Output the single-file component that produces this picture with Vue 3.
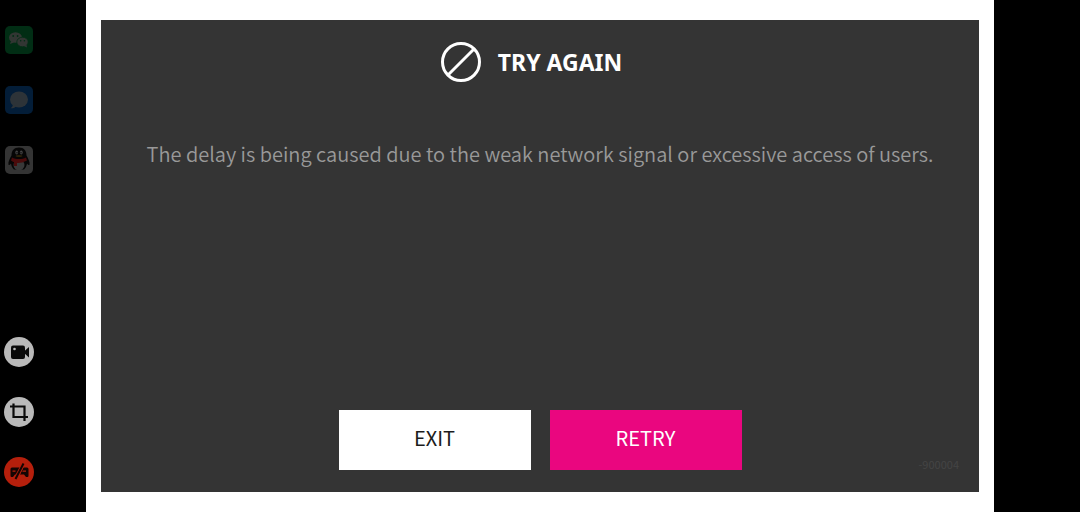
<script setup>
const title = 'TRY AGAIN'
const message = 'The delay is being caused due to the weak network signal or excessive access of users.'
const errorCode = '-900004'
</script>

<template>
  <div class="screen">
    <aside class="rail">
      <nav class="group">
        <button class="tool" aria-label="WeChat">
          <svg viewBox="0 0 30 30">
            <rect x="1" y="1" width="28" height="28" rx="5" fill="#012d14" />
            <ellipse cx="11.5" cy="12.5" rx="6.5" ry="5.3" fill="#323633" />
            <path d="M7 16l-1 3 4-1.500z" fill="#323633" />
            <ellipse cx="18.500" cy="17" rx="5.700" ry="4.800" fill="#323633" stroke="#012d14" stroke-width="0.8" />
            <path d="M20 21l3 1.500-.6-3z" fill="#323633" />
            <g fill="#012d14">
              <circle cx="9.200" cy="11" r="0.9" />
              <circle cx="13.600" cy="11" r="0.9" />
              <circle cx="16.700" cy="15.800" r="0.8" />
              <circle cx="20.400" cy="15.800" r="0.8" />
            </g>
          </svg>
        </button>
        <button class="tool" aria-label="Messages">
          <svg viewBox="0 0 30 30">
            <rect x="1" y="1" width="28" height="28" rx="5" fill="#031d38" />
            <ellipse cx="15" cy="14.500" rx="9" ry="8" fill="#2d3338" />
            <path d="M9 19c0 2-1 3.500-2.500 4.200 2.500.3 4.500-.5 6-2z" fill="#2d3338" />
          </svg>
        </button>
        <button class="tool" aria-label="QQ">
          <svg viewBox="0 0 30 30">
            <rect x="1" y="1" width="28" height="28" rx="5" fill="#343434" />
            <path d="M15 2.500c-5 0-7.500 3-7.500 8C5.500 14 4 17 4.500 19.500c.2 1 1.500.5 2.500-1 .3 2.500 1.500 4.500 3 6h10c1.500-1.500 2.700-3.500 3-6 1 1.500 2.300 2 2.500 1 .5-2.500-1-5.500-3-9C22.500 5.500 20 2.500 15 2.500z" fill="#060606" />
            <ellipse cx="15" cy="20" rx="5.500" ry="5.300" fill="#383838" />
            <path d="M8 12.500c4 2 10 2 14 0l1 3c-3.500 2-7.500 2.600-10 2.400v3h-3V17.200c-1-.4-2-1-3-1.700z" fill="#4a0b0b" />
            <ellipse cx="12.700" cy="7.500" rx="1.400" ry="1.900" fill="#444" />
            <ellipse cx="17.300" cy="7.500" rx="1.400" ry="1.900" fill="#444" />
            <circle cx="13" cy="7.800" r="0.700" fill="#060606" />
            <circle cx="17" cy="7.800" r="0.700" fill="#060606" />
            <ellipse cx="15" cy="11" rx="3.500" ry="0.800" fill="#3a2c0a" />
          </svg>
        </button>
      </nav>
      <div class="group">
        <button class="tool" aria-label="Record">
          <svg viewBox="0 0 30 30">
            <circle cx="15" cy="15" r="15" fill="#b9b9b9" />
            <rect x="7" y="8.500" width="14" height="13.500" rx="2" fill="#0a0a0a" />
            <path d="M20 14.500l5-4.500v10.500l-5-4.500z" fill="#0a0a0a" />
            <circle cx="10.500" cy="12" r="1.300" fill="#b9b9b9" />
          </svg>
        </button>
        <button class="tool" aria-label="Crop">
          <svg viewBox="0 0 30 30">
            <circle cx="15" cy="15" r="15" fill="#b9b9b9" />
            <path d="M9.500 6.500v13.500h14.500M6 9.500h14.500V24" fill="none" stroke="#0a0a0a" stroke-width="2.200" />
          </svg>
        </button>
        <button class="tool" aria-label="Game mode off">
          <svg viewBox="0 0 30 30">
            <circle cx="15" cy="15" r="15" fill="#b51f0c" />
            <path d="M8 10.500h8l-3 7h-2L9 20H7.500q-1 0-1-1.500V12q0-1.500 1.500-1.500z" fill="#140503" />
            <path d="M19.500 10.500H23q1.500 0 1.500 1.500v6.500q0 1.500-1 1.500H22l-2-2.500h-4z" fill="#140503" />
            <path d="M8.500 14.200h3M18.500 14.200h3.500" stroke="#b51f0c" stroke-width="1.300" />
            <path d="M19.500 6.500L11.500 22" stroke="#b51f0c" stroke-width="3.800" />
            <path d="M19.500 6.500L11.500 22" stroke="#140503" stroke-width="2" />
          </svg>
        </button>
      </div>
    </aside>

    <main class="stage">
      <section class="dialog">
        <header class="heading">
          <svg class="ban" viewBox="0 0 42 42" aria-hidden="true">
            <circle cx="21" cy="21" r="18.500" />
            <path d="M8 34L34 8" />
          </svg>
          <h1>{{ title }}</h1>
        </header>
        <p class="message">{{ message }}</p>
        <footer class="actions">
          <button class="action exit">EXIT</button>
          <button class="action retry">RETRY</button>
          <span class="code">{{ errorCode }}</span>
        </footer>
      </section>
    </main>
  </div>
</template>

<style>
body {
  background: #000;
}
</style>

<style scoped>
.screen {
  display: grid;
  grid-template-columns: 86px 1fr 86px;
  min-height: 100vh;
  background: #000;
  font-family: "Noto Sans CJK KR", "Noto Sans", sans-serif;
}
.rail {
  display: flex;
  flex-direction: column;
  justify-content: space-between;
  padding: 25px 4px;
}
.group {
  display: flex;
  flex-direction: column;
  gap: 30px;
}
.tool {
  width: 30px;
  height: 30px;
  padding: 0;
  border: 0;
  background: none;
}
.tool svg {
  display: block;
  width: 100%;
  height: 100%;
}
.stage {
  display: flex;
  padding: 20px 15px;
  background: #fff;
}
.dialog {
  position: relative;
  flex: 1;
  display: flex;
  flex-direction: column;
  background: #343434;
  padding: 21px 20px 22px;
}
.heading {
  display: flex;
  align-items: center;
  justify-content: center;
  gap: 16px;
  padding-right: 18px;
}
.ban {
  width: 42px;
  height: 42px;
  fill: none;
  stroke: #fff;
  stroke-width: 3;
}
h1 {
  margin: 0;
  font-family: "Noto Sans", sans-serif;
  font-size: 23px;
  line-height: 32px;
  font-weight: 700;
  color: #fff;
}
.message {
  margin: 55px 0 0;
  font-size: 20px;
  font-weight: 350;
  line-height: 32px;
  text-align: center;
  color: #999;
}
.actions {
  display: flex;
  justify-content: center;
  gap: 19px;
  margin-top: auto;
}
.action {
  width: 192px;
  height: 60px;
  padding: 0 0 4px;
  border: 0;
  font: inherit;
  font-size: 20px;
  line-height: 32px;
}
.exit {
  background: #fff;
  color: #1c1c1c;
}
.retry {
  background: #ea067f;
  color: #fff;
}
.code {
  position: absolute;
  right: 20px;
  bottom: 18px;
  font-size: 11px;
  line-height: 20px;
  color: #444;
}
</style>
